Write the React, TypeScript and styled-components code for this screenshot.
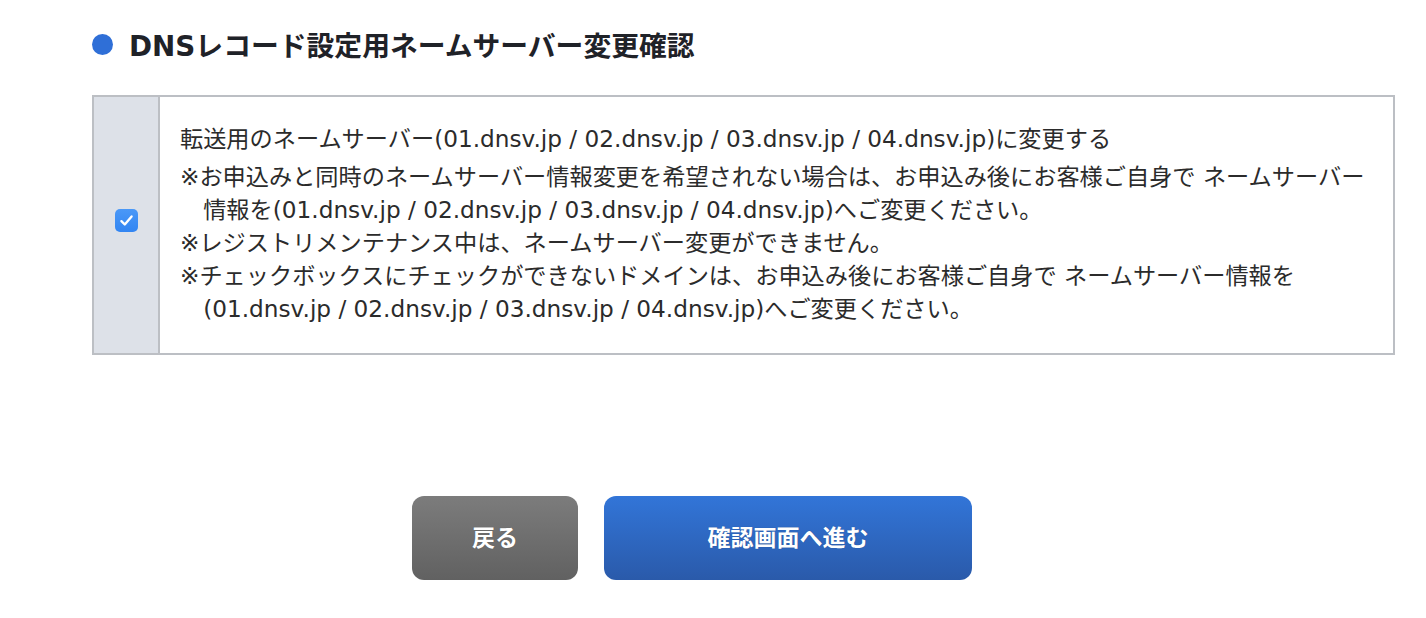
import styled, { createGlobalStyle } from 'styled-components';

const GlobalStyle = createGlobalStyle`
  body {
    margin: 0;
    background: #ffffff;
    font-family: "DejaVu Sans", "Noto Sans CJK JP", sans-serif;
    color: #2b2b2b;
  }
`;

const Page = styled.div`
  padding: 27px 31px 0 92px;
`;

const Heading = styled.h2`
  display: flex;
  align-items: center;
  gap: 16px;
  margin: 0 0 29px;
  font-size: 27.8px;
  line-height: 39px;
  font-weight: bold;
  color: #1f2228;
`;

const Dot = styled.span`
  width: 21px;
  height: 21px;
  border-radius: 50%;
  background: #2f6fd7;
  margin-top: -5px;
  flex: none;
`;

const Table = styled.div`
  display: flex;
  border: 2px solid #bcbfc4;
`;

const CheckCell = styled.div`
  width: 64px;
  flex: none;
  display: flex;
  align-items: center;
  justify-content: center;
  background: #dde1e8;
  border-right: 2px solid #bcbfc4;
`;

const CheckBox = styled.span`
  width: 23px;
  height: 23px;
  margin-bottom: 10px;
  border-radius: 5px;
  background: linear-gradient(#4a98f7, #3285f2);
  display: flex;
  align-items: center;
  justify-content: center;
`;

const ContentCell = styled.div`
  flex: 1;
  padding: 25px 20px 28px 20px;
  font-size: 23.2px;
  line-height: 33px;
  color: #2b2b2b;
`;

const Lead = styled.p`
  margin: 0 0 5px;
`;

const Note = styled.p`
  margin: 0;
  padding-left: 1em;
  text-indent: -1em;
`;

const ButtonRow = styled.div`
  display: flex;
  gap: 26px;
  margin-top: 141px;
  padding-left: 320px;
`;

const Button = styled.button<{ $variant: 'back' | 'next' }>`
  height: 84px;
  width: ${(p) => (p.$variant === 'back' ? '166px' : '368px')};
  padding: 0 0 4px;
  border: none;
  border-radius: 12px;
  color: #ffffff;
  font-family: "Noto Sans CJK JP", sans-serif;
  font-size: 23px;
  font-weight: bold;
  cursor: pointer;
  text-shadow: 0 0 1px rgba(0, 0, 0, 0.3);
  background: ${(p) =>
    p.$variant === 'back'
      ? 'linear-gradient(#7c7c7c, #616161)'
      : 'linear-gradient(#3275d8, #2a5aaa)'};
`;

const App = () => {
  return (
    <>
      <GlobalStyle />
      <Page>
        <Heading>
          <Dot />
          DNSレコード設定用ネームサーバー変更確認
        </Heading>
        <Table>
          <CheckCell>
            <CheckBox>
              <svg width="17" height="17" viewBox="0 0 16 16" fill="none">
                <path
                  d="M3.2 8.6 L6.4 11.8 L12.8 4.2"
                  stroke="#ffffff"
                  strokeWidth="2.2"
                  strokeLinecap="round"
                  strokeLinejoin="round"
                />
              </svg>
            </CheckBox>
          </CheckCell>
          <ContentCell>
            <Lead>
              転送用のネームサーバー(01.dnsv.jp / 02.dnsv.jp / 03.dnsv.jp / 04.dnsv.jp)に変更する
            </Lead>
            <Note>
              ※お申込みと同時のネームサーバー情報変更を希望されない場合は、お申込み後にお客様ご自身で ネームサーバー
              <br />
              情報を(01.dnsv.jp / 02.dnsv.jp / 03.dnsv.jp / 04.dnsv.jp)へご変更ください。
            </Note>
            <Note>※レジストリメンテナンス中は、ネームサーバー変更ができません。</Note>
            <Note>
              ※チェックボックスにチェックができないドメインは、お申込み後にお客様ご自身で ネームサーバー情報を
              <br />
              (01.dnsv.jp / 02.dnsv.jp / 03.dnsv.jp / 04.dnsv.jp)へご変更ください。
            </Note>
          </ContentCell>
        </Table>
        <ButtonRow>
          <Button $variant="back">戻る</Button>
          <Button $variant="next">確認画面へ進む</Button>
        </ButtonRow>
      </Page>
    </>
  );
};

export default App;
